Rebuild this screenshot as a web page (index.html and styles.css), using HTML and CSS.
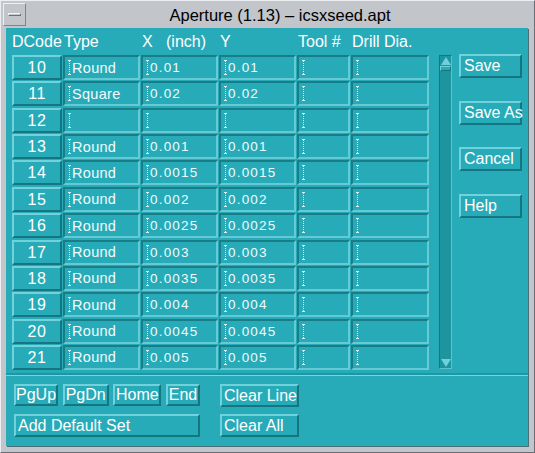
FILE: index.html
```html
<!DOCTYPE html>
<html lang="en">
<head>
    <title>Aperture (1.13) – icsxseed.apt</title>
    <meta charset="utf-8">
    <link rel="stylesheet" href="styles.css">
</head>
<body>
    <div class="window">
        <div class="titlebar">
            <div class="menu-btn"><span></span></div>
            <div class="title">Aperture (1.13) – icsxseed.apt</div>
        </div>

        <div class="client">
            <div class="main">
                <div class="table">
                    <div class="head">
                        <span>DCode</span>
                        <span>Type</span>
                        <span>X &nbsp;&nbsp;(inch)</span>
                        <span>Y</span>
                        <span>Tool #</span>
                        <span>Drill Dia.</span>
                    </div>
                    <div class="rows">
                        <button class="code">10</button><div class="field type">Round</div><div class="field num">0.01</div><div class="field num">0.01</div><div class="field"></div><div class="field"></div>
                        <button class="code">11</button><div class="field type">Square</div><div class="field num">0.02</div><div class="field num">0.02</div><div class="field"></div><div class="field"></div>
                        <button class="code">12</button><div class="field type"></div><div class="field num"></div><div class="field num"></div><div class="field"></div><div class="field"></div>
                        <button class="code">13</button><div class="field type">Round</div><div class="field num">0.001</div><div class="field num">0.001</div><div class="field"></div><div class="field"></div>
                        <button class="code">14</button><div class="field type">Round</div><div class="field num">0.0015</div><div class="field num">0.0015</div><div class="field"></div><div class="field"></div>
                        <button class="code">15</button><div class="field type">Round</div><div class="field num">0.002</div><div class="field num">0.002</div><div class="field"></div><div class="field"></div>
                        <button class="code">16</button><div class="field type">Round</div><div class="field num">0.0025</div><div class="field num">0.0025</div><div class="field"></div><div class="field"></div>
                        <button class="code">17</button><div class="field type">Round</div><div class="field num">0.003</div><div class="field num">0.003</div><div class="field"></div><div class="field"></div>
                        <button class="code">18</button><div class="field type">Round</div><div class="field num">0.0035</div><div class="field num">0.0035</div><div class="field"></div><div class="field"></div>
                        <button class="code">19</button><div class="field type">Round</div><div class="field num">0.004</div><div class="field num">0.004</div><div class="field"></div><div class="field"></div>
                        <button class="code">20</button><div class="field type">Round</div><div class="field num">0.0045</div><div class="field num">0.0045</div><div class="field"></div><div class="field"></div>
                        <button class="code">21</button><div class="field type">Round</div><div class="field num">0.005</div><div class="field num">0.005</div><div class="field"></div><div class="field"></div>
                    </div>
                </div>

                <div class="scrollbar">
                    <div class="arrow up"></div>
                    <div class="thumb"></div>
                    <div class="trough"></div>
                    <div class="arrow down"></div>
                </div>

                <div class="side">
                    <button class="btn">Save</button>
                    <button class="btn">Save As</button>
                    <button class="btn">Cancel</button>
                    <button class="btn">Help</button>
                </div>
            </div>

            <div class="separator"></div>

            <div class="bottom">
                <div class="nav">
                    <button class="btn small w-pgup">PgUp</button>
                    <button class="btn small w-pgdn">PgDn</button>
                    <button class="btn small w-home">Home</button>
                    <button class="btn small w-end">End</button>
                </div>
                <button class="btn wide">Clear Line</button>
                <button class="btn wide">Add Default Set</button>
                <button class="btn wide">Clear All</button>
            </div>
        </div>
    </div>
</body>
</html>
```

FILE: styles.css
```css
* {
    box-sizing: border-box;
}

body {
    margin: 0;
    font-family: "Liberation Sans", Arial, sans-serif;
}

.window {
    width: 535px;
    height: 453px;
    background-color: #c2c5ca;
    border: 1px solid;
    border-color: #eceef1 #6a6d73 #6a6d73 #eceef1;
}

.titlebar {
    height: 27px;
    display: flex;
    align-items: center;
}

.menu-btn {
    width: 23px;
    height: 23px;
    margin-left: 2px;
    border: 1px solid;
    border-color: #eef0f2 #80838a #80838a #eef0f2;
    display: flex;
    align-items: center;
    justify-content: center;
}

.menu-btn span {
    width: 13px;
    height: 3px;
    border: 1px solid;
    border-color: #f4f5f7 #6d7077 #6d7077 #f4f5f7;
}

.title {
    flex: 1;
    text-align: center;
    font-size: 16.5px;
    color: #000;
    padding-top: 1px;
}

.client {
    margin-left: 5px;
    width: 522px;
    height: 418px;
    background-color: #28abb9;
    color: #fff;
    box-shadow: 1px 1px 0 #4b6e74;
}

.main {
    display: flex;
    padding-left: 6px;
    height: 345px;
}

.head,
.rows {
    display: grid;
    grid-template-columns: 50px 77px 77px 77px 53px 78px;
    column-gap: 1px;
}

.head {
    height: 27px;
    align-items: center;
    font-size: 16px;
    padding-top: 1px;
    white-space: pre;
}

.head span + span {
    padding-left: 1px;
}

.rows {
    grid-auto-rows: 25px;
    row-gap: 1.36px;
}

button {
    font-family: "Liberation Sans", Arial, sans-serif;
    font-size: 16px;
    color: #fff;
    background-color: #28abb9;
    padding: 0;
    margin: 0;
    white-space: nowrap;
    border: 2px solid;
    border-color: #72d2dc #16767f #16767f #72d2dc;
}

.code {
    text-align: center;
    letter-spacing: 0.5px;
    padding-top: 1px;
}

.field {
    display: flex;
    align-items: center;
    padding-left: 3px;
    border: 2px solid;
    border-color: #187d87 #66cad4 #66cad4 #187d87;
    color: #f2fbfc;
    white-space: nowrap;
}

.field::before {
    content: "";
    width: 3px;
    height: 13px;
    margin-right: 1px;
    flex: none;
    border-top: 1px solid #d6f1f4;
    border-bottom: 1px solid #d6f1f4;
    background: repeating-linear-gradient(to bottom, #d6f1f4 0 1px, transparent 1px 2px) center / 1px 100% no-repeat;
}

.type {
    font-size: 14.5px;
    letter-spacing: 0.3px;
}

.num {
    font-size: 13.5px;
    letter-spacing: 1.2px;
}

.scrollbar {
    width: 13px;
    height: 314px;
    margin-top: 27px;
    margin-left: 10px;
    background-color: #1e949e;
    border: 1px solid;
    border-color: #177680 #5cc2cc #5cc2cc #177680;
    display: flex;
    flex-direction: column;
}

.arrow {
    height: 10px;
    position: relative;
}

.arrow::before {
    content: "";
    position: absolute;
    left: 1px;
    width: 0;
    height: 0;
    border-left: 5px solid transparent;
    border-right: 5px solid transparent;
}

.arrow.up::before {
    top: 1px;
    border-bottom: 8px solid #6fd0da;
}

.arrow.down::before {
    bottom: 1px;
    border-top: 8px solid #6fd0da;
}

.thumb {
    height: 5px;
    background-color: #28abb9;
    border: 1px solid;
    border-color: #72d2dc #16767f #16767f #72d2dc;
}

.trough {
    flex: 1;
}

.side {
    display: flex;
    flex-direction: column;
    gap: 22.7px;
    margin-left: 7px;
    margin-top: 26px;
}

.btn {
    width: 63px;
    height: 24px;
    text-align: left;
    padding-left: 3px;
}

.separator {
    height: 3px;
    background-color: #1f96a1;
    border-bottom: 1px solid #7ad4dc;
}

.bottom {
    display: grid;
    grid-template-columns: 186px 79px;
    column-gap: 20px;
    row-gap: 7px;
    padding: 8px 0 0 8px;
}

.nav {
    display: flex;
    justify-content: space-between;
}

.btn.small {
    height: 22px;
    text-align: center;
    padding-left: 0;
}

.w-pgup { width: 44px; }
.w-pgdn { width: 46px; }
.w-home { width: 48px; }
.w-end { width: 34px; }

.btn.wide {
    width: 100%;
    height: 23px;
    padding-left: 2px;
}
```
